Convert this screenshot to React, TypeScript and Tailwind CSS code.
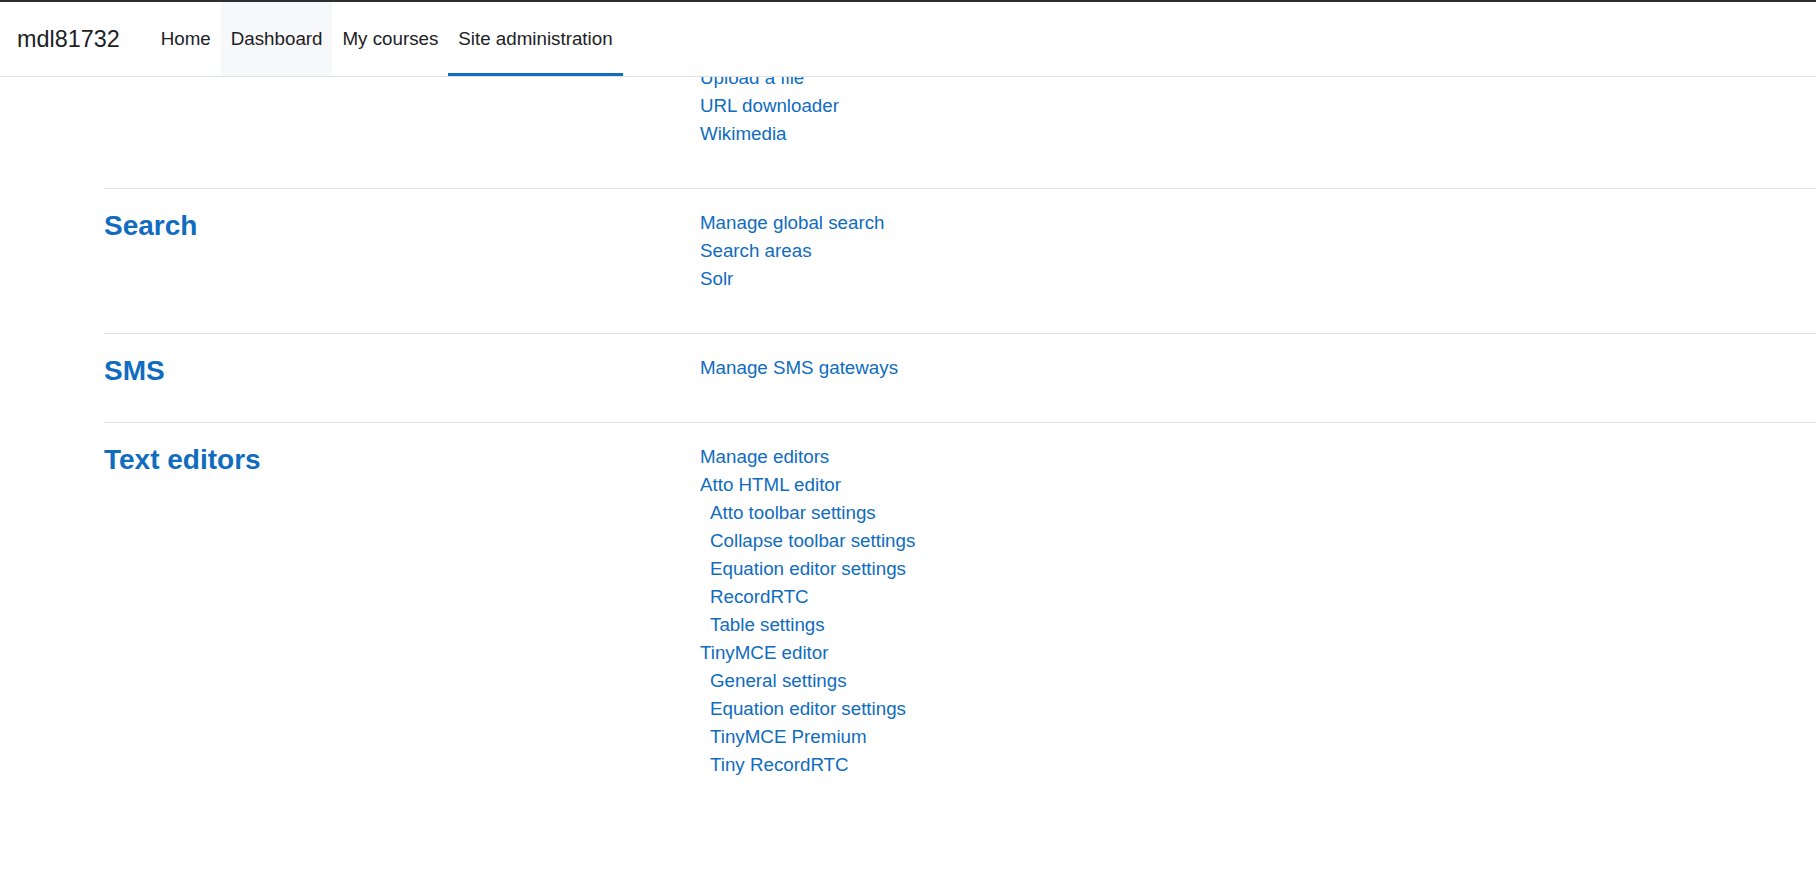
import React from "react";

type Item = { label: string; sub?: boolean };

const sections: { title?: string; items: Item[] }[] = [
  {
    items: [
      { label: "Upload a file" },
      { label: "URL downloader" },
      { label: "Wikimedia" },
    ],
  },
  {
    title: "Search",
    items: [
      { label: "Manage global search" },
      { label: "Search areas" },
      { label: "Solr" },
    ],
  },
  {
    title: "SMS",
    items: [{ label: "Manage SMS gateways" }],
  },
  {
    title: "Text editors",
    items: [
      { label: "Manage editors" },
      { label: "Atto HTML editor" },
      { label: "Atto toolbar settings", sub: true },
      { label: "Collapse toolbar settings", sub: true },
      { label: "Equation editor settings", sub: true },
      { label: "RecordRTC", sub: true },
      { label: "Table settings", sub: true },
      { label: "TinyMCE editor" },
      { label: "General settings", sub: true },
      { label: "Equation editor settings", sub: true },
      { label: "TinyMCE Premium", sub: true },
      { label: "Tiny RecordRTC", sub: true },
    ],
  },
];

const navItems = [
  { label: "Home" },
  { label: "Dashboard", hover: true },
  { label: "My courses" },
  { label: "Site administration", active: true },
];

export default function App() {
  return (
    <div className="min-h-screen bg-white font-['Liberation_Sans',Arial,sans-serif] text-[#1d2125]">
      <header className="fixed top-0 inset-x-0 z-10 h-[77px] bg-white border-t-2 border-t-[#2f2f2f] border-b border-b-[#dee2e6] flex items-stretch">
        <a className="flex items-center pl-[17px] pr-[31px] pt-[2px] text-[23.4px] text-[#1d2125] leading-none">
          mdl81732
        </a>
        <nav className="flex items-stretch">
          {navItems.map((n) => (
            <a
              key={n.label}
              className={
                "relative flex items-center px-[10px] pt-[1px] text-[18.75px] leading-none text-[#1d2125] " +
                (n.hover ? "bg-[#f7f8f9]" : "")
              }
            >
              {n.label}
              {n.active && (
                <span className="absolute left-0 right-0 bottom-0 h-[3px] bg-[#0f6cbf]" />
              )}
            </a>
          ))}
        </nav>
      </header>

      <main className="pt-[64px] pl-[104px]">
        {sections.map((s, i) => (
          <section
            key={i}
            className={
              "grid grid-cols-[596px_1fr] pb-[40px] " +
              (i === 0 ? "" : "border-t border-[#dee2e6] pt-[20px]")
            }
          >
            <div className="h-[28px]">
              {s.title && (
                <h3 className="text-[28px] font-bold leading-[1.2] text-[#0f6cbf] whitespace-nowrap">
                  {s.title}
                </h3>
              )}
            </div>
            <ul className="flex flex-col">
              {s.items.map((it, j) => (
                <li
                  key={j}
                  className={
                    "text-[18.75px] leading-[28px] text-[#0f6cbf] " +
                    (it.sub ? "pl-[10px]" : "")
                  }
                >
                  <a>{it.label}</a>
                </li>
              ))}
            </ul>
          </section>
        ))}
      </main>
    </div>
  );
}
